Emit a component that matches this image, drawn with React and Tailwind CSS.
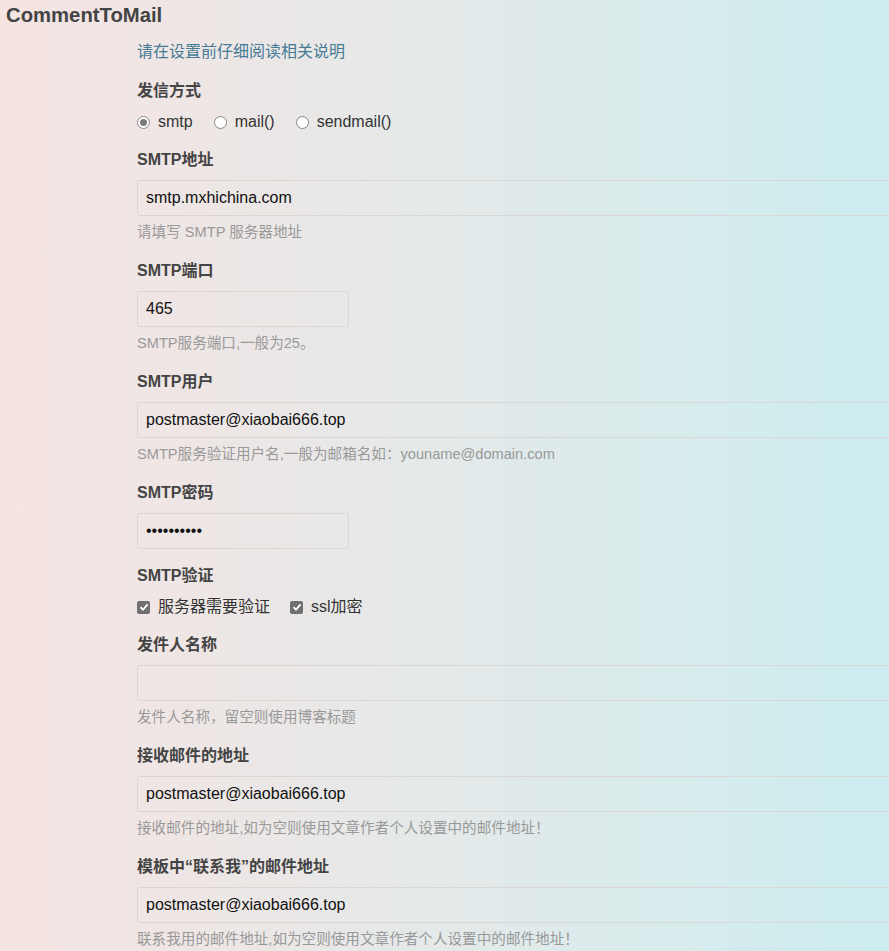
import React from "react";

const font = { fontFamily: "'Liberation Sans', Arial, 'Noto Sans CJK SC', sans-serif" };

const Label = ({ children }) => (
  <div className="h-6 leading-6 text-base font-bold text-[#444]">{children}</div>
);

const Help = ({ children }) => (
  <p className="mt-1.5 h-5 leading-5 text-[14.6px] text-[#999]">{children}</p>
);

const TextInput = ({ value, short }) => (
  <input
    type="text"
    readOnly
    value={value}
    className={`mt-2 block h-9 ${short ? "w-[212px]" : "w-[900px]"} bg-transparent border border-[#d9d6d3] rounded-[2px] px-2 text-base text-[#111] outline-none`}
    style={font}
  />
);

const Radio = ({ checked, label }) => (
  <label className="flex items-center">
    <span className="w-[13px] h-[13px] rounded-full border border-[#858585] bg-white flex items-center justify-center">
      {checked && <span className="w-[7px] h-[7px] rounded-full bg-[#7a7a7a]" />}
    </span>
    <span className="ml-2 text-base text-[#333]">{label}</span>
  </label>
);

const Check = ({ label }) => (
  <label className="flex items-center">
    <span className="w-[13px] h-[13px] rounded-[2px] bg-[#707070] flex items-center justify-center">
      <svg width="10" height="10" viewBox="0 0 10 10">
        <path d="M1.5 5.2 L4 7.6 L8.6 2.4" fill="none" stroke="#fff" strokeWidth="1.8" />
      </svg>
    </span>
    <span className="ml-2 text-base text-[#333]">{label}</span>
  </label>
);

export default function App() {
  return (
    <div
      className="min-h-[951px] w-full overflow-hidden bg-gradient-to-r from-[#f5e4e2] via-[#e4e9e9] to-[#ccedf0]"
      style={font}
    >
      <h2 className="h-[30px] leading-[30px] pl-[6px] text-[20.3px] font-bold text-[#444]">CommentToMail</h2>

      <div className="pl-[137px]">
        <p className="mt-[10px] h-6 leading-6 text-base text-[#467b96]">请在设置前仔细阅读相关说明</p>

        {/* 发信方式 */}
        <div className="mt-[15px]">
          <Label>发信方式</Label>
          <div className="mt-[7px] h-6 flex items-center gap-[21px]">
            <Radio checked label="smtp" />
            <Radio label="mail()" />
            <Radio label="sendmail()" />
          </div>
        </div>

        <div className="mt-[14px]">
          <Label>SMTP地址</Label>
          <TextInput value="smtp.mxhichina.com" />
          <Help>请填写 SMTP 服务器地址</Help>
        </div>

        <div className="mt-[17px]">
          <Label>SMTP端口</Label>
          <TextInput value="465" short />
          <Help>SMTP服务端口,一般为25。</Help>
        </div>

        <div className="mt-[17px]">
          <Label>SMTP用户</Label>
          <TextInput value="postmaster@xiaobai666.top" />
          <Help>SMTP服务验证用户名,一般为邮箱名如：youname@domain.com</Help>
        </div>

        <div className="mt-[17px]">
          <Label>SMTP密码</Label>
          <TextInput value="••••••••••" short />
        </div>

        <div className="mt-[15px]">
          <Label>SMTP验证</Label>
          <div className="mt-[7px] h-6 flex items-center gap-5">
            <Check label="服务器需要验证" />
            <Check label="ssl加密" />
          </div>
        </div>

        <div className="mt-[14px]">
          <Label>发件人名称</Label>
          <TextInput value="" />
          <Help>发件人名称，留空则使用博客标题</Help>
        </div>

        <div className="mt-[17px]">
          <Label>接收邮件的地址</Label>
          <TextInput value="postmaster@xiaobai666.top" />
          <Help>接收邮件的地址,如为空则使用文章作者个人设置中的邮件地址！</Help>
        </div>

        <div className="mt-[17px]">
          <Label>模板中“联系我”的邮件地址</Label>
          <TextInput value="postmaster@xiaobai666.top" />
          <Help>联系我用的邮件地址,如为空则使用文章作者个人设置中的邮件地址！</Help>
        </div>
      </div>
    </div>
  );
}
